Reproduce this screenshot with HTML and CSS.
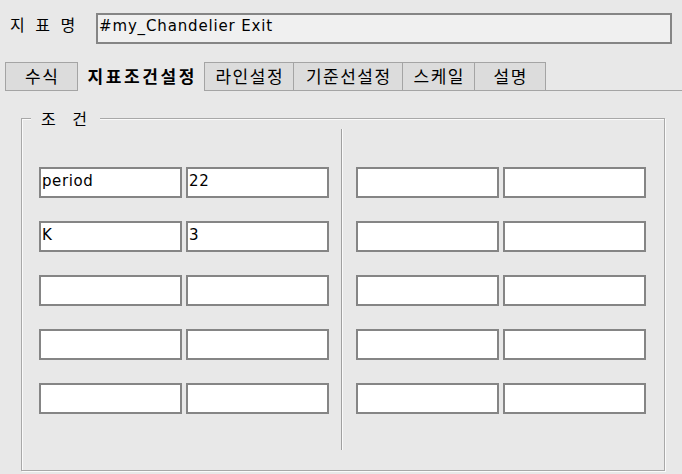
FILE: index.html
```html
<!DOCTYPE html>
<html lang="ko">
<head>
<meta charset="utf-8">
<link rel="stylesheet" href="styles.css">
</head>
<body>
<div class="top">
  <div class="name-label">지 표 명</div>
  <div class="name-input">#my_Chandelier Exit</div>
</div>
<div class="tabs">
  <div class="tab first">수식</div>
  <div class="tab active">지표조건설정</div>
  <div class="tab">라인설정</div>
  <div class="tab w109">기준선설정</div>
  <div class="tab w72">스케일</div>
  <div class="tab w72 last">설명</div>
  <div class="tab-fill"></div>
</div>
<div class="group">
  <div class="legend">조 건</div>
  <div class="col left">
    <div class="row"><div class="field">period</div><div class="field">22</div></div>
    <div class="row"><div class="field">K</div><div class="field">3</div></div>
    <div class="row"><div class="field"></div><div class="field"></div></div>
    <div class="row"><div class="field"></div><div class="field"></div></div>
    <div class="row"><div class="field"></div><div class="field"></div></div>
  </div>
  <div class="divider"></div>
  <div class="col right">
    <div class="row"><div class="field"></div><div class="field"></div></div>
    <div class="row"><div class="field"></div><div class="field"></div></div>
    <div class="row"><div class="field"></div><div class="field"></div></div>
    <div class="row"><div class="field"></div><div class="field"></div></div>
    <div class="row"><div class="field"></div><div class="field"></div></div>
  </div>
</div>
</body>
</html>
```
FILE: styles.css
```css
html, body {
  margin: 0;
  padding: 0;
  background: #e8e8e8;
}
body {
  width: 682px;
  height: 474px;
  overflow: hidden;
  font-family: "DejaVu Sans", "Noto Sans CJK KR", sans-serif;
  color: #000;
}
.top {
  display: flex;
  align-items: flex-start;
  padding: 13px 0 0 10px;
}
.name-label {
  width: 86px;
  font-family: "Noto Sans CJK KR", sans-serif;
  font-size: 16px;
  line-height: 20px;
  padding-top: 1px;
  word-spacing: 6px;
}
.name-input {
  box-sizing: border-box;
  width: 576px;
  height: 31px;
  border: 2px solid #858585;
  background: #f0f0f0;
  font-size: 15px;
  line-height: 18px;
  padding: 2px 0 0 1px;
  letter-spacing: 0.85px;
}
.tabs {
  display: flex;
  margin-top: 18px;
  padding-left: 5px;
}
.tab {
  box-sizing: border-box;
  height: 29px;
  width: 89px;
  border-top: 1px solid #a4a4a4;
  border-left: 1px solid #a4a4a4;
  border-bottom: 1px solid #a4a4a4;
  background: #dcdcdc;
  font-family: "Noto Sans CJK KR", sans-serif;
  font-size: 17px;
  line-height: 20px;
  padding-top: 3px;
  text-align: center;
  letter-spacing: 1.5px;
  text-indent: 1.5px;
}
.tab.first {
  width: 73px;
  border-right: 1px solid #a4a4a4;
}
.tab.w109 { width: 109px; }
.tab.w72 { width: 72px; }
.tab.last {
  border-right: 1px solid #a4a4a4;
}
.tab.active {
  width: 126px;
  border: none;
  background: #e8e8e8;
  font-weight: bold;
  letter-spacing: 2.6px;
  text-indent: 2.6px;
  padding-top: 4px;
}
.tab-fill {
  flex: 1;
  height: 29px;
  box-sizing: border-box;
  border-bottom: 1px solid #a4a4a4;
}
.group {
  position: relative;
  box-sizing: border-box;
  margin: 27px 0 0 21px;
  width: 644px;
  height: 353px;
  border: 1px solid #a8a8a8;
  box-shadow: inset 1px 1px 0 #fafafa, 1px 1px 0 #fafafa;
  display: flex;
  align-items: flex-start;
}
.legend {
  position: absolute;
  top: -11px;
  left: 9px;
  padding: 0 13px 0 10px;
  background: #e8e8e8;
  font-family: "Noto Sans CJK KR", sans-serif;
  font-size: 16px;
  line-height: 20px;
  word-spacing: 12px;
}
.col {
  display: flex;
  flex-direction: column;
  gap: 23px;
  padding-top: 48px;
}
.col.left {
  padding-left: 17px;
}
.col.right {
  margin-left: 13px;
}
.row {
  display: flex;
  gap: 4px;
}
.field {
  box-sizing: border-box;
  width: 143px;
  height: 31px;
  border: 2px solid #858585;
  background: #fff;
  font-size: 15px;
  line-height: 18px;
  padding: 3px 0 0 1px;
  letter-spacing: 0.6px;
}
.divider {
  margin: 10px 0 0 12px;
  width: 1px;
  height: 321px;
  background: #a0a0a0;
  border-right: 1px solid #fafafa;
}
```
